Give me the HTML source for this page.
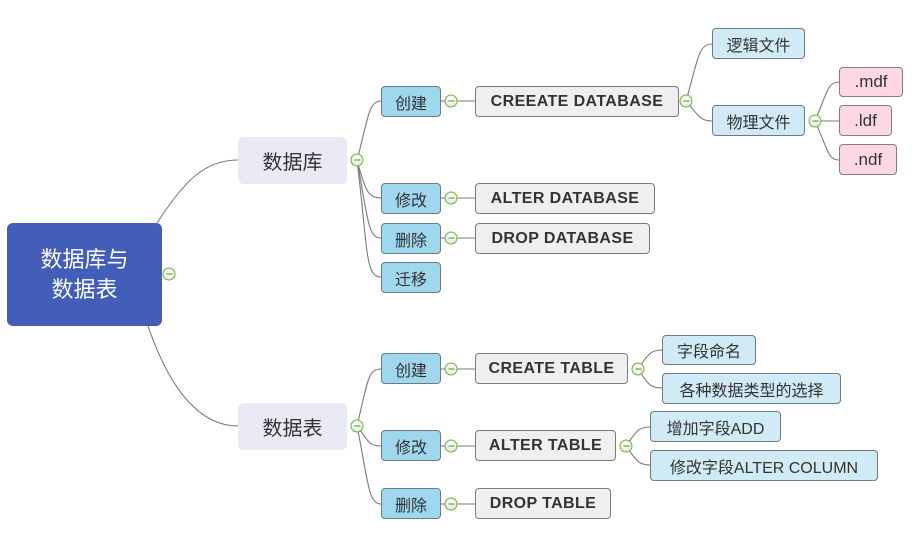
<!DOCTYPE html>
<html><head><meta charset="utf-8"><style>
body{margin:0;width:921px;height:536px;background:#fff;position:relative;overflow:hidden;font-family:"Liberation Sans","Noto Sans CJK SC",sans-serif;}
.b{position:absolute;box-sizing:border-box;display:flex;align-items:center;justify-content:center;white-space:nowrap;color:#333;}
.l2{background:#9fd7ee;border:1px solid #6d7b82;border-radius:4px;font-size:16px;}
.g{background:#efefef;border:1px solid #7a7a7a;border-radius:4px;font-size:16px;font-weight:bold;color:#333;letter-spacing:0.4px;}
.lb{background:#d1ebf6;border:1px solid #6d7b82;border-radius:4px;font-size:16px;}
.pk{background:#fdd8e3;border:1px solid #8a7a80;border-radius:4px;font-size:17px;}
.c{position:absolute;width:13px;height:13px;border:1.5px solid #6fb13b;border-radius:50%;background:radial-gradient(circle at 50% 35%,#fff,#d8e6d0);box-sizing:border-box;transform:translate(-50%,-50%);}
.c:after{content:"";position:absolute;left:2.5px;right:2.5px;top:4.5px;height:1.3px;background:#4c8a22;}
</style></head><body>
<svg width="921" height="536" style="position:absolute;left:0;top:0" fill="none" stroke="#7a7a7a" stroke-width="1.1">
<path d="M157 223 C185 180,205 160,238 160"/>
<path d="M148 326 C170 390,200 426,238 426"/>
<path d="M357 160 C368 120,368 101,381 101"/>
<path d="M357 160 C365 190,368 198,381 198"/>
<path d="M357 160 C368 220,368 238,381 238"/>
<path d="M357 160 C368 250,365 277,381 277"/>
<path d="M357 426 C368 380,368 369,381 369"/>
<path d="M357 426 C368 440,368 446,381 446"/>
<path d="M357 426 C368 480,368 504,381 504"/>
<path d="M441 101 H475 M441 198 H475 M441 238 H475 M441 369 H475 M441 446 H475 M441 504 H475"/>
<path d="M686 101 C698 60,698 44,712 44"/>
<path d="M686 101 C698 115,700 121,712 121"/>
<path d="M815 121 C828 90,828 82,839 82"/>
<path d="M815 121 H839"/>
<path d="M815 121 C828 150,828 160,839 160"/>
<path d="M638 369 C648 355,650 350,662 350"/>
<path d="M638 369 C648 384,650 388,662 388"/>
<path d="M626 446 C636 432,638 427,650 427"/>
<path d="M626 446 C636 460,638 465,650 465"/>
</svg>
<div class="b" style="left:7px;top:223px;width:155px;height:103px;background:#425eb8;border-radius:6px;color:#fff;font-size:22px;line-height:30px;text-align:center;white-space:normal">数据库与<br>数据表</div>
<div class="b" style="left:238px;top:137px;width:109px;height:47px;background:#e9eaf3;border-radius:6px;font-size:20px">数据库</div>
<div class="b" style="left:238px;top:403px;width:109px;height:47px;background:#e9eaf3;border-radius:6px;font-size:20px">数据表</div>
<div class="b l2" style="left:381px;top:86px;width:60px;height:31px">创建</div>
<div class="b l2" style="left:381px;top:183px;width:60px;height:31px">修改</div>
<div class="b l2" style="left:381px;top:223px;width:60px;height:31px">删除</div>
<div class="b l2" style="left:381px;top:262px;width:60px;height:31px">迁移</div>
<div class="b l2" style="left:381px;top:353px;width:60px;height:31px">创建</div>
<div class="b l2" style="left:381px;top:430px;width:60px;height:31px">修改</div>
<div class="b l2" style="left:381px;top:488px;width:60px;height:31px">删除</div>
<div class="b g" style="left:475px;top:86px;width:204px;height:31px">CREEATE DATABASE</div>
<div class="b g" style="left:475px;top:183px;width:180px;height:31px">ALTER DATABASE</div>
<div class="b g" style="left:475px;top:223px;width:175px;height:31px">DROP DATABASE</div>
<div class="b g" style="left:475px;top:353px;width:153px;height:31px">CREATE TABLE</div>
<div class="b g" style="left:475px;top:430px;width:141px;height:31px">ALTER TABLE</div>
<div class="b g" style="left:475px;top:488px;width:136px;height:31px">DROP TABLE</div>
<div class="b lb" style="left:712px;top:28px;width:93px;height:31px">逻辑文件</div>
<div class="b lb" style="left:712px;top:105px;width:93px;height:31px">物理文件</div>
<div class="b pk" style="left:839px;top:67px;width:64px;height:30px">.mdf</div>
<div class="b pk" style="left:839px;top:105px;width:53px;height:31px">.ldf</div>
<div class="b pk" style="left:839px;top:144px;width:58px;height:31px">.ndf</div>
<div class="b lb" style="left:662px;top:335px;width:94px;height:30px">字段命名</div>
<div class="b lb" style="left:662px;top:373px;width:179px;height:31px">各种数据类型的选择</div>
<div class="b lb" style="left:650px;top:411px;width:131px;height:31px">增加字段ADD</div>
<div class="b lb" style="left:650px;top:450px;width:228px;height:31px">修改字段ALTER COLUMN</div>
<div class="c" style="left:169px;top:274px"></div>
<div class="c" style="left:357px;top:160px"></div>
<div class="c" style="left:357px;top:426px"></div>
<div class="c" style="left:451px;top:101px"></div>
<div class="c" style="left:451px;top:198px"></div>
<div class="c" style="left:451px;top:238px"></div>
<div class="c" style="left:451px;top:369px"></div>
<div class="c" style="left:451px;top:446px"></div>
<div class="c" style="left:451px;top:504px"></div>
<div class="c" style="left:686px;top:101px"></div>
<div class="c" style="left:815px;top:121px"></div>
<div class="c" style="left:638px;top:369px"></div>
<div class="c" style="left:626px;top:446px"></div>
</body></html>
